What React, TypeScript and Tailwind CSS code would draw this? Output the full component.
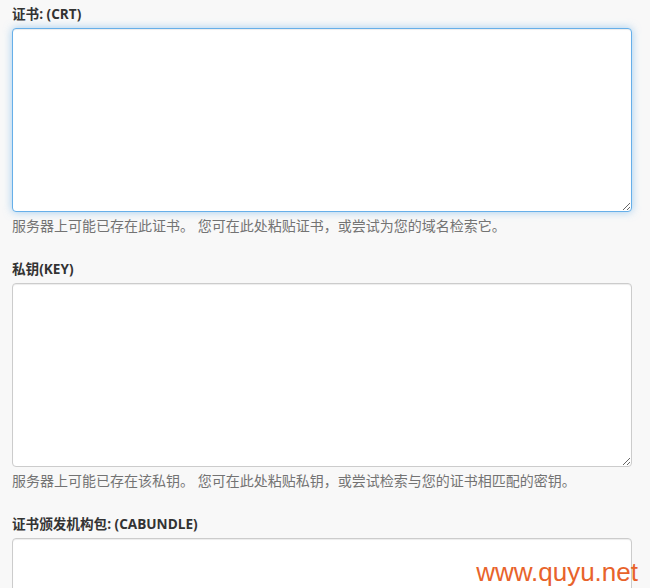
import React from "react";

const cjk = "font-['Open_Sans','Noto_Sans_CJK_SC',sans-serif]";

function Field({
  label,
  help,
  focused,
}: {
  label: React.ReactNode;
  help?: string;
  focused?: boolean;
}) {
  return (
    <div className="flex flex-col">
      <label className="mb-1 text-[13.6px] font-bold leading-5 text-[#333]">{label}</label>
      <textarea
        autoFocus={focused}
        className={
          focused
            ? "h-[184px] w-[620px] rounded-[4px] border border-[#66afe9] bg-white px-3 py-1.5 text-sm outline-none shadow-[inset_0_1px_1px_rgba(0,0,0,0.075),0_0_8px_rgba(102,175,233,0.6)]"
            : "h-[184px] w-[620px] rounded-[4px] border border-[#ccc] bg-white px-3 py-1.5 text-sm outline-none shadow-[inset_0_1px_1px_rgba(0,0,0,0.075)]"
        }
      />
      {help && <p className="mt-1 text-[14px] leading-5 text-[#737373]">{help}</p>}
    </div>
  );
}

export default function App() {
  return (
    <div className={`relative h-[588px] w-[650px] overflow-hidden bg-[#f8f8f8] px-3 pt-1 ${cjk}`}>
      <div className="flex flex-col gap-[23px]">
        <Field
          focused
          label="证书: (CRT)"
          help="服务器上可能已存在此证书。 您可在此处粘贴证书，或尝试为您的域名检索它。"
        />
        <Field
          label="私钥(KEY)"
          help="服务器上可能已存在该私钥。 您可在此处粘贴私钥，或尝试检索与您的证书相匹配的密钥。"
        />
        <Field label="证书颁发机构包: (CABUNDLE)" />
      </div>
      <div className="absolute bottom-[3px] right-[12px] font-['Liberation_Sans',sans-serif] text-[26px] leading-none text-[#e8632b]">
        www.quyu.net
      </div>
    </div>
  );
}
